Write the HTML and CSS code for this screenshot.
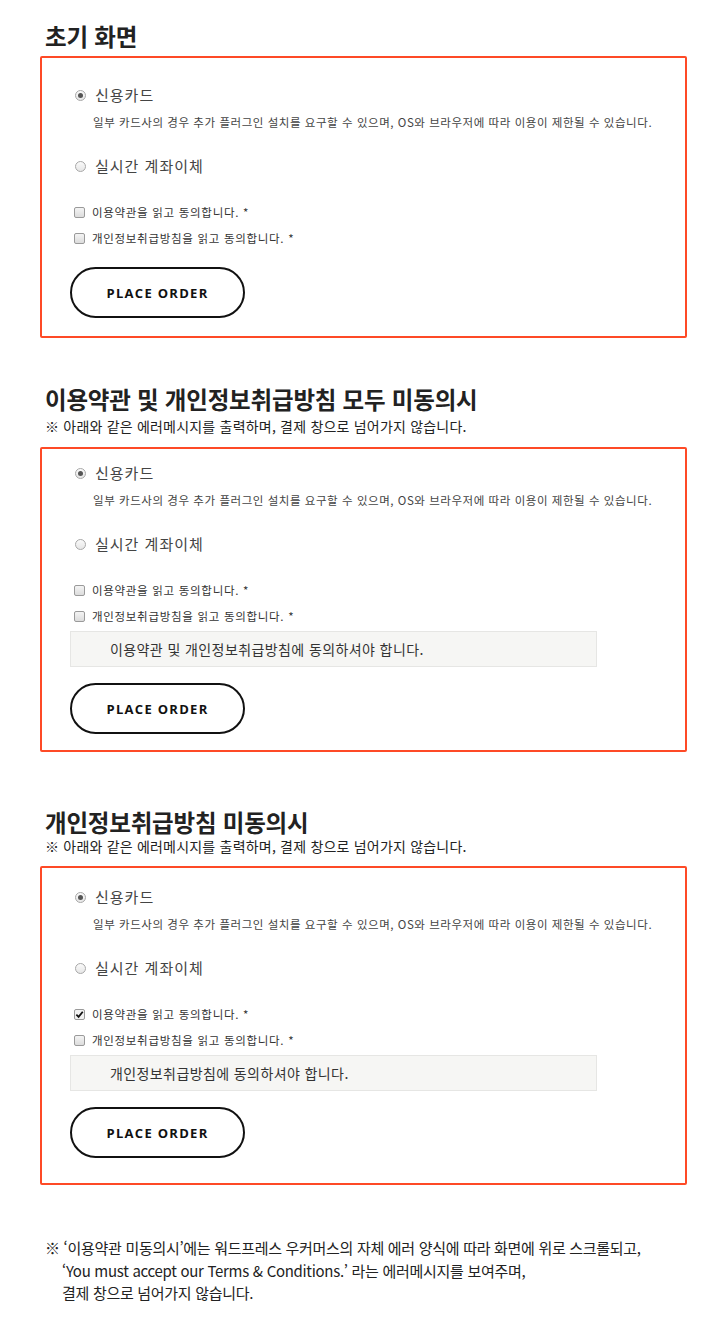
FILE: index.html
```html
<!DOCTYPE html>
<html lang="ko">
<head>
    <meta charset="UTF-8">
    <meta name="viewport" content="width=device-width, initial-scale=1.0">
    <title>결제 화면 안내</title>
    <link rel="stylesheet" href="styles.css">
</head>
<body>
    <!-- 초기 화면 -->
    <h2 class="title first">초기 화면</h2>
    <div class="box box-1">
        <div class="radio-row"><span class="radio checked"></span>신용카드</div>
        <p class="desc">일부 카드사의 경우 추가 플러그인 설치를 요구할 수 있으며, OS와 브라우저에 따라 이용이 제한될 수 있습니다.</p>
        <div class="radio-row second"><span class="radio"></span>실시간 계좌이체</div>
        <div class="check-row"><span class="check"></span>이용약관을 읽고 동의합니다. *</div>
        <div class="check-row"><span class="check"></span>개인정보취급방침을 읽고 동의합니다. *</div>
        <button class="order">PLACE ORDER</button>
    </div>

    <!-- 모두 미동의 -->
    <h2 class="title t2">이용약관 및 개인정보취급방침 모두 미동의시</h2>
    <p class="sub">※ 아래와 같은 에러메시지를 출력하며, 결제 창으로 넘어가지 않습니다.</p>
    <div class="box box-2">
        <div class="radio-row"><span class="radio checked"></span>신용카드</div>
        <p class="desc">일부 카드사의 경우 추가 플러그인 설치를 요구할 수 있으며, OS와 브라우저에 따라 이용이 제한될 수 있습니다.</p>
        <div class="radio-row second"><span class="radio"></span>실시간 계좌이체</div>
        <div class="check-row"><span class="check"></span>이용약관을 읽고 동의합니다. *</div>
        <div class="check-row"><span class="check"></span>개인정보취급방침을 읽고 동의합니다. *</div>
        <div class="error">이용약관 및 개인정보취급방침에 동의하셔야 합니다.</div>
        <button class="order">PLACE ORDER</button>
    </div>

    <!-- 개인정보취급방침 미동의 -->
    <h2 class="title t3">개인정보취급방침 미동의시</h2>
    <p class="sub">※ 아래와 같은 에러메시지를 출력하며, 결제 창으로 넘어가지 않습니다.</p>
    <div class="box box-3">
        <div class="radio-row"><span class="radio checked"></span>신용카드</div>
        <p class="desc">일부 카드사의 경우 추가 플러그인 설치를 요구할 수 있으며, OS와 브라우저에 따라 이용이 제한될 수 있습니다.</p>
        <div class="radio-row second"><span class="radio"></span>실시간 계좌이체</div>
        <div class="check-row"><span class="check checked"><svg viewBox="0 0 10 10" width="9" height="9"><path d="M1.5 5.2 L4 7.6 L8.6 2" fill="none" stroke="#111" stroke-width="2"/></svg></span>이용약관을 읽고 동의합니다. *</div>
        <div class="check-row"><span class="check"></span>개인정보취급방침을 읽고 동의합니다. *</div>
        <div class="error">개인정보취급방침에 동의하셔야 합니다.</div>
        <button class="order">PLACE ORDER</button>
    </div>

    <!-- 하단 안내 -->
    <div class="note">
        <p>※ ‘이용약관 미동의시’에는 워드프레스 우커머스의 자체 에러 양식에 따라 화면에 위로 스크롤되고,</p>
        <p class="indent">‘You must accept our Terms &amp; Conditions.’ 라는 에러메시지를 보여주며,</p>
        <p class="indent">결제 창으로 넘어가지 않습니다.</p>
    </div>
</body>
</html>
```

FILE: styles.css
```css
/* 기본 */
body { margin: 0; padding: 0 0 20px; font-family: "Noto Sans CJK KR", "Noto Sans", sans-serif; color: #333; background: #fff; }
p { margin: 0; }

/* 제목 */
.title { margin: 0 0 0 45px; font-size: 23.5px; line-height: 30px; font-weight: 700; color: #222; letter-spacing: -0.2px; }
.title.first { margin-top: 21px; }
.title.t2 { margin-top: 46px; }
.title.t3 { margin-top: 55px; }
.sub { margin: 2px 0 0 45px; font-size: 14px; line-height: 20px; color: #222; letter-spacing: 0.2px; }
.t3 + .sub { margin-top: -1px; }

/* 결제 박스 */
.box { margin: 0 33px 0 40px; border: 2px solid #fe4a26; border-radius: 2px; padding: 27px 10px 16px 33px; }
.box-1 { margin-top: 5px; padding-bottom: 18px; }
.box-2 { margin-top: 11px; padding-top: 14px; }
.box-3 { margin-top: 10px; padding-top: 19px; padding-bottom: 25px; }

.radio-row { display: flex; align-items: center; gap: 9px; font-size: 15px; line-height: 20px; color: #444; letter-spacing: 1px; }
.radio-row.second { margin-top: 26px; }
.radio { width: 11px; height: 11px; border: 1px solid #a8a8a8; border-radius: 50%; background: linear-gradient(#fafafa, #e6e6e6); box-sizing: border-box; position: relative; flex: none; }
.radio.checked::after { content: ""; position: absolute; left: 2px; top: 2px; width: 5px; height: 5px; border-radius: 50%; background: #555; }
.desc { margin: 9px 0 0 18px; font-size: 11.5px; line-height: 16px; color: #444; letter-spacing: 0.55px; white-space: nowrap; }

.check-row { display: flex; align-items: center; gap: 7px; font-size: 11.5px; line-height: 18px; color: #333; margin-top: 8px; letter-spacing: 0.7px; }
.radio-row.second + .check-row { margin-top: 27px; }
.check { width: 11px; height: 11px; border: 1px solid #9a9a9a; border-radius: 2px; background: linear-gradient(#f4f4f4, #dcdcdc); box-sizing: border-box; display: flex; align-items: center; justify-content: center; margin-left: -1px; flex: none; }
.check.checked { background: #f2f2f2; }

.error { margin: 6px 78px 0 -5px; padding: 8px 0 8px 39px; background: #f6f6f4; border: 1px solid #e6e6e4; font-size: 14px; line-height: 18px; color: #333; letter-spacing: 0.4px; }

.order { display: block; margin: 20px 0 0 -5px; width: 175px; height: 51px; border: 2px solid #111; border-radius: 26px; background: #fff; font-family: "Open Sans", sans-serif; font-weight: 700; font-size: 13px; letter-spacing: 1.3px; color: #111; }
.error + .order { margin-top: 16px; }

/* 하단 안내 */
.note { margin: 52px 0 0 45px; font-size: 15px; line-height: 22.5px; color: #222; letter-spacing: -0.3px; }
.note .indent { padding-left: 17px; }
```
